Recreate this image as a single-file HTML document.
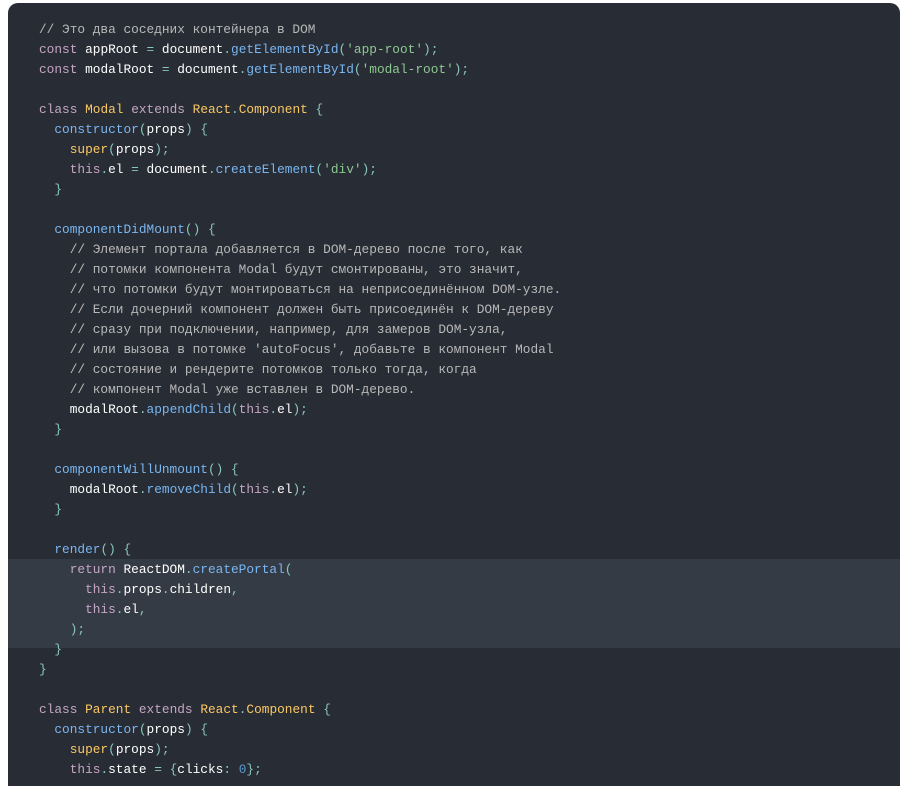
<!DOCTYPE html>
<html><head><meta charset="utf-8"><style>
html,body{margin:0;padding:0;background:#fff;width:905px;height:786px;overflow:hidden}
.wrap{position:relative;width:905px;height:786px;overflow:hidden}
.box{position:absolute;left:8px;top:3px;width:892px;height:783px;background:#282c34;border-radius:10px 10px 0 0}
.hl{position:absolute;left:8px;top:559px;width:892px;height:89px;background:#353b45}
pre{position:absolute;left:39px;top:20px;margin:0;font-family:"Liberation Mono","DejaVu Sans Mono",monospace;font-size:12.8px;line-height:20px;color:#fff}
.c{color:#b8b8b8}.k{color:#c5a5c5}.f{color:#79b6f2}.s{color:#8dc891}.n{color:#fac863}.p{color:#88c6be}.m{color:#5a9bcf}
</style></head><body><div class="wrap">
<div class="box"></div><div class="hl"></div>
<pre><span class="c">// Это два соседних контейнера в DOM</span>
<span class="k">const</span> appRoot <span class="p">=</span> document<span class="p">.</span><span class="f">getElementById</span><span class="p">(</span><span class="s">'app-root'</span><span class="p">);</span>
<span class="k">const</span> modalRoot <span class="p">=</span> document<span class="p">.</span><span class="f">getElementById</span><span class="p">(</span><span class="s">'modal-root'</span><span class="p">);</span>

<span class="k">class</span> <span class="n">Modal</span> <span class="k">extends</span> <span class="n">React</span><span class="p">.</span><span class="n">Component</span> <span class="p">{</span>
  <span class="f">constructor</span><span class="p">(</span>props<span class="p">)</span> <span class="p">{</span>
    <span class="n">super</span><span class="p">(</span>props<span class="p">);</span>
    <span class="k">this</span><span class="p">.</span>el <span class="p">=</span> document<span class="p">.</span><span class="f">createElement</span><span class="p">(</span><span class="s">'div'</span><span class="p">);</span>
  <span class="p">}</span>

  <span class="f">componentDidMount</span><span class="p">()</span> <span class="p">{</span>
    <span class="c">// Элемент портала добавляется в DOM-дерево после того, как</span>
    <span class="c">// потомки компонента Modal будут смонтированы, это значит,</span>
    <span class="c">// что потомки будут монтироваться на неприсоединённом DOM-узле.</span>
    <span class="c">// Если дочерний компонент должен быть присоединён к DOM-дереву</span>
    <span class="c">// сразу при подключении, например, для замеров DOM-узла,</span>
    <span class="c">// или вызова в потомке 'autoFocus', добавьте в компонент Modal</span>
    <span class="c">// состояние и рендерите потомков только тогда, когда</span>
    <span class="c">// компонент Modal уже вставлен в DOM-дерево.</span>
    modalRoot<span class="p">.</span><span class="f">appendChild</span><span class="p">(</span><span class="k">this</span><span class="p">.</span>el<span class="p">);</span>
  <span class="p">}</span>

  <span class="f">componentWillUnmount</span><span class="p">()</span> <span class="p">{</span>
    modalRoot<span class="p">.</span><span class="f">removeChild</span><span class="p">(</span><span class="k">this</span><span class="p">.</span>el<span class="p">);</span>
  <span class="p">}</span>

  <span class="f">render</span><span class="p">()</span> <span class="p">{</span>
    <span class="k">return</span> ReactDOM<span class="p">.</span><span class="f">createPortal</span><span class="p">(</span>
      <span class="k">this</span><span class="p">.</span>props<span class="p">.</span>children<span class="p">,</span>
      <span class="k">this</span><span class="p">.</span>el<span class="p">,</span>
    <span class="p">);</span>
  <span class="p">}</span>
<span class="p">}</span>

<span class="k">class</span> <span class="n">Parent</span> <span class="k">extends</span> <span class="n">React</span><span class="p">.</span><span class="n">Component</span> <span class="p">{</span>
  <span class="f">constructor</span><span class="p">(</span>props<span class="p">)</span> <span class="p">{</span>
    <span class="n">super</span><span class="p">(</span>props<span class="p">);</span>
    <span class="k">this</span><span class="p">.</span>state <span class="p">=</span> <span class="p">{</span>clicks<span class="p">:</span> <span class="m">0</span><span class="p">};</span>
</pre>
</div></body></html>
